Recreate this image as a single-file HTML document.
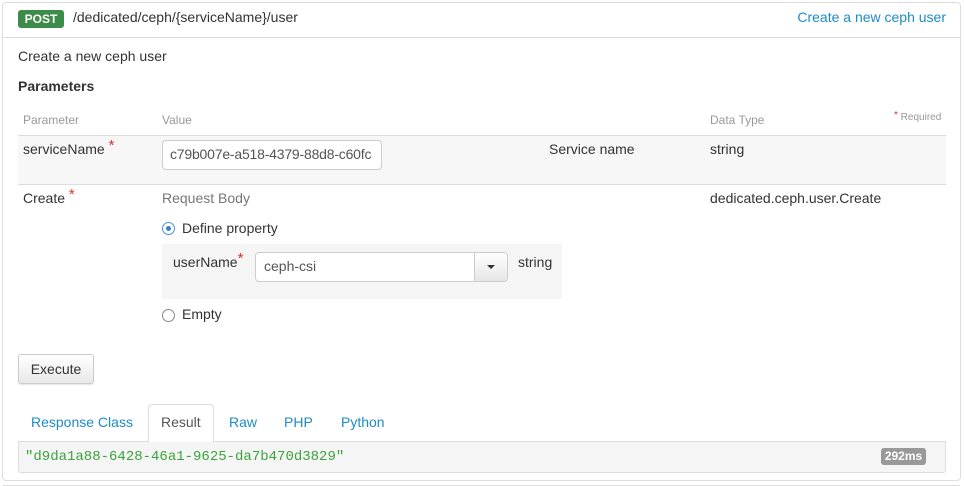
<!DOCTYPE html>
<html><head><meta charset="utf-8"><style>
*{box-sizing:border-box;margin:0;padding:0}
body{width:964px;height:486px;background:#fff;font-family:"Liberation Sans",sans-serif;font-size:14px;color:#333;position:relative;overflow:hidden}
.a{position:absolute;white-space:nowrap}
.box{position:absolute;left:2px;top:2px;width:959px;height:479px;border:1px solid #ddd;border-radius:4px}
.hl{position:absolute;height:1px;background:#ddd}
.star{color:#d9302c;font-size:15px;position:relative;top:-4px}
.inp{position:absolute;border:1px solid #ccc;border-radius:4px;background:#fff;padding:0 7px;line-height:27px;color:#555;overflow:hidden;white-space:nowrap}
.radio{position:absolute;width:13px;height:13px;border-radius:50%;border:1px solid #888;background:#fff}
</style></head><body>
<div class="box"></div>
<div class="a" style="left:18px;top:10px;width:46px;height:18px;background:#3c8b49;border-radius:3px;color:#fff;font-weight:bold;font-size:12px;line-height:18px;text-align:center">POST</div>
<div class="a" style="left:73px;top:9px;font-size:14px;color:#333">/dedicated/ceph/{serviceName}/user</div>
<div class="a" style="right:18px;top:9px;color:#1e8bc9;font-size:14px">Create a new ceph user</div>
<div class="hl" style="left:3px;top:37px;width:957px"></div>
<div class="a" style="left:18px;top:48px">Create a new ceph user</div>
<div class="a" style="left:18px;top:78px;font-weight:bold;font-size:14px">Parameters</div>
<div class="a" style="left:23px;top:113px;font-size:12px;color:#999">Parameter</div>
<div class="a" style="left:162px;top:113px;font-size:12px;color:#999">Value</div>
<div class="a" style="left:710px;top:113px;font-size:12px;color:#999">Data Type</div>
<div class="a" style="left:894px;top:112px;font-size:10px;color:#999"><span style="color:#d9302c;font-size:10px;position:relative;top:-2px">*</span> Required</div>
<div class="hl" style="left:18px;top:135px;width:928px"></div>
<div class="a" style="left:18px;top:136px;width:928px;height:48px;background:#f7f7f7"></div>
<div class="a" style="left:23px;top:141px">serviceName <span class="star">*</span></div>
<div class="inp" style="left:162px;top:140px;width:220px;height:30px;padding:0 0 0 7px;letter-spacing:-0.2px">c79b007e-a518-4379-88d8-c60fc</div>
<div class="a" style="left:549px;top:141px">Service name</div>
<div class="a" style="left:710px;top:141px">string</div>
<div class="hl" style="left:18px;top:184px;width:928px"></div>
<div class="a" style="left:23px;top:190px">Create <span class="star">*</span></div>
<div class="a" style="left:162px;top:190px;color:#777">Request Body</div>
<div class="a" style="left:710px;top:190px">dedicated.ceph.user.Create</div>
<div class="radio" style="left:162px;top:222px;border-color:#4a90d9"><div style="position:absolute;left:3px;top:3px;width:5px;height:5px;border-radius:50%;background:#3a7fd0"></div></div>
<div class="a" style="left:182px;top:220px">Define property</div>
<div class="a" style="left:162px;top:244px;width:400px;height:55px;background:#f5f5f5"></div>
<div class="a" style="left:173px;top:254px">userName<span class="star">*</span></div>
<div class="inp" style="left:255px;top:252px;width:253px;height:30px;padding:0">
<span style="position:absolute;left:8px;top:0">ceph-csi</span>
<div style="position:absolute;right:0;top:0;width:33px;height:28px;border-left:1px solid #ccc;background:linear-gradient(#fff,#e6e6e6)"><div style="position:absolute;left:12px;top:12px;border-left:4px solid transparent;border-right:4px solid transparent;border-top:4px solid #333"></div></div>
</div>
<div class="a" style="left:518px;top:254px">string</div>
<div class="radio" style="left:162px;top:309px"></div>
<div class="a" style="left:182px;top:306px">Empty</div>
<div class="a" style="left:18px;top:354px;width:76px;height:30px;border:1px solid #ccc;border-radius:3px;background:linear-gradient(#fff,#e8e8e8);text-align:center;line-height:28px;box-shadow:0 1px 1px rgba(0,0,0,.1)">Execute</div>
<div class="a" style="left:148px;top:404px;width:66px;height:38px;border:1px solid #ddd;border-bottom:none;border-radius:4px 4px 0 0;background:#fff;z-index:2"></div>
<div class="a" style="left:31px;top:414px;color:#1e8bc9">Response Class</div>
<div class="a" style="left:161px;top:414px;color:#555;z-index:3">Result</div>
<div class="a" style="left:229px;top:414px;color:#1e8bc9">Raw</div>
<div class="a" style="left:284px;top:414px;color:#1e8bc9">PHP</div>
<div class="a" style="left:341px;top:414px;color:#1e8bc9">Python</div>
<div class="a" style="left:18px;top:441px;width:928px;height:32px;background:#f5f5f5;border:1px solid #ddd;border-radius:0 0 3px 3px"></div>
<div class="a" style="left:25px;top:449px;font-family:'Liberation Mono',monospace;font-size:14px;color:#3aa33a">"d9da1a88-6428-46a1-9625-da7b470d3829"</div>
<div class="a" style="left:881px;top:448px;width:45px;height:17px;background:#999;border-radius:3px;color:#fff;font-size:12px;font-weight:bold;text-align:center;line-height:17px">292ms</div>
<div class="hl" style="left:3px;top:485px;width:957px"></div>
</body></html>
